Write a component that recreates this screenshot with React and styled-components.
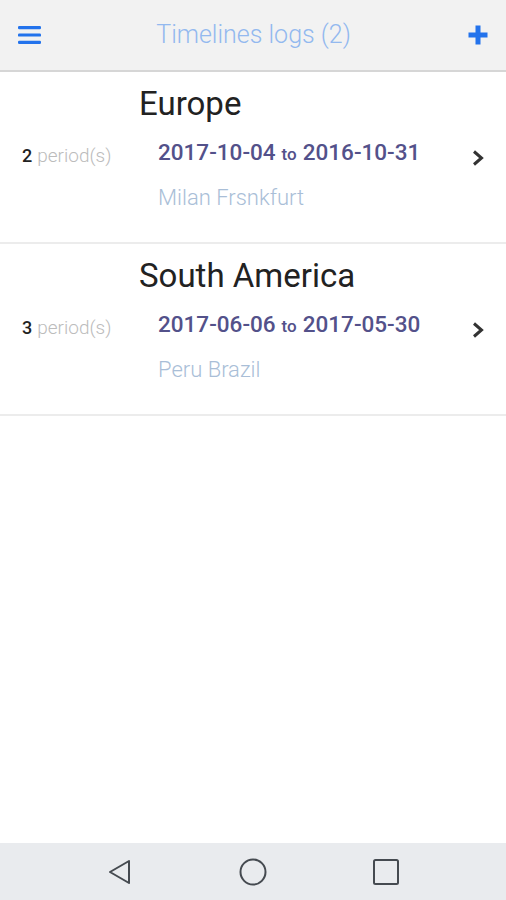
import React from "react";
import styled, { createGlobalStyle } from "styled-components";

const GlobalStyle = createGlobalStyle`
  html, body {
    margin: 0;
    padding: 0;
    background: #ffffff;
    font-family: Roboto, "Noto Sans", sans-serif;
  }
  * {
    box-sizing: border-box;
  }
`;

const LOGS = [
  {
    name: "Europe",
    periods: 2,
    from: "2017-10-04",
    to: "2016-10-31",
    places: "Milan Frsnkfurt",
  },
  {
    name: "South America",
    periods: 3,
    from: "2017-06-06",
    to: "2017-05-30",
    places: "Peru Brazil",
  },
];

const Screen = styled.div`
  width: 506px;
  height: 900px;
  display: flex;
  flex-direction: column;
  background: #ffffff;
`;

const Header = styled.div`
  height: 72px;
  flex-shrink: 0;
  display: flex;
  align-items: center;
  justify-content: space-between;
  padding: 0 16px 0 17px;
  background: #f2f2f2;
  border-bottom: 2px solid #d6d6d6;
`;

const IconButton = styled.button`
  border: none;
  background: none;
  padding: 0;
  width: 24px;
  height: 24px;
  display: flex;
  align-items: center;
  justify-content: center;
  cursor: pointer;
`;

const Title = styled.div`
  font-size: 25px;
  font-weight: 300;
  color: #93b9ef;
  margin-top: -2px;
`;

const List = styled.div`
  flex: 1;
  display: flex;
  flex-direction: column;
`;

const Row = styled.div`
  display: flex;
  align-items: center;
  border-bottom: 2px solid #ececec;
`;

const Periods = styled.div`
  width: 139px;
  flex-shrink: 0;
  padding-left: 22px;
  font-size: 19px;
  font-weight: 300;
  color: #bcbcbc;
  margin-top: -3px;

  b {
    font-weight: 500;
    font-size: 18px;
    color: #222;
    margin-right: 5px;
  }
`;

const Body = styled.div`
  flex: 1;
  padding: 13px 0 31px;
`;

const Name = styled.div`
  font-size: 33px;
  line-height: 38px;
  color: #222;
  font-weight: 400;
`;

const Dates = styled.div`
  margin: 15px 0 0 19px;
  line-height: 28px;
  font-size: 22.5px;
  font-weight: 500;
  color: #53518a;

  span {
    font-size: 17px;
    margin: 0 6px;
  }
`;

const Places = styled.div`
  margin: 17px 0 0 19px;
  line-height: 26px;
  font-size: 22px;
  font-weight: 300;
  color: #a9bed7;
`;

const Chevron = styled.div`
  width: 56px;
  flex-shrink: 0;
  display: flex;
  justify-content: center;
  margin-top: 1px;
`;

const NavBar = styled.div`
  height: 57px;
  flex-shrink: 0;
  background: #e9ebee;
  display: flex;
  align-items: center;
  justify-content: center;
  gap: 101px;
`;

const NavIcon = styled.div`
  width: 32px;
  height: 32px;
  display: flex;
  align-items: center;
  justify-content: center;
`;

const Menu = () => (
  <svg width="23" height="20" viewBox="0 0 23 20">
    <rect x="0" y="1" width="23" height="3.2" rx="1.2" fill="#2373ec" />
    <rect x="0" y="8.4" width="23" height="3.2" rx="1.2" fill="#2373ec" />
    <rect x="0" y="15.8" width="23" height="3.2" rx="1.2" fill="#2373ec" />
  </svg>
);

const Plus = () => (
  <svg width="20" height="20" viewBox="0 0 20 20">
    <path d="M10 0.5 V19.5 M0.5 10 H19.5" stroke="#2373ec" strokeWidth="5" />
  </svg>
);

const ChevronIcon = () => (
  <svg width="14" height="18" viewBox="0 0 14 18">
    <path d="M3 2.5 L10.5 9 L3 15.5" fill="none" stroke="#333" strokeWidth="3" />
  </svg>
);

export default function App() {
  return (
    <>
      <GlobalStyle />
      <Screen>
        <Header>
          <IconButton>
            <Menu />
          </IconButton>
          <Title>Timelines logs (2)</Title>
          <IconButton>
            <Plus />
          </IconButton>
        </Header>
        <List>
          {LOGS.map((log) => (
            <Row key={log.name}>
              <Periods>
                <b>{log.periods}</b>period(s)
              </Periods>
              <Body>
                <Name>{log.name}</Name>
                <Dates>
                  {log.from}
                  <span>to</span>
                  {log.to}
                </Dates>
                <Places>{log.places}</Places>
              </Body>
              <Chevron>
                <ChevronIcon />
              </Chevron>
            </Row>
          ))}
        </List>
        <NavBar>
          <NavIcon>
            <svg width="26" height="28" viewBox="0 0 26 28">
              <path d="M22 3 L3 14 L22 25 Z" fill="none" stroke="#454a50" strokeWidth="2" strokeLinejoin="round" />
            </svg>
          </NavIcon>
          <NavIcon>
            <svg width="28" height="28" viewBox="0 0 28 28">
              <circle cx="14" cy="14" r="12.5" fill="none" stroke="#454a50" strokeWidth="2" />
            </svg>
          </NavIcon>
          <NavIcon>
            <svg width="28" height="28" viewBox="0 0 28 28">
              <rect x="2" y="2" width="24" height="24" rx="1.5" fill="none" stroke="#454a50" strokeWidth="2" />
            </svg>
          </NavIcon>
        </NavBar>
      </Screen>
    </>
  );
}
